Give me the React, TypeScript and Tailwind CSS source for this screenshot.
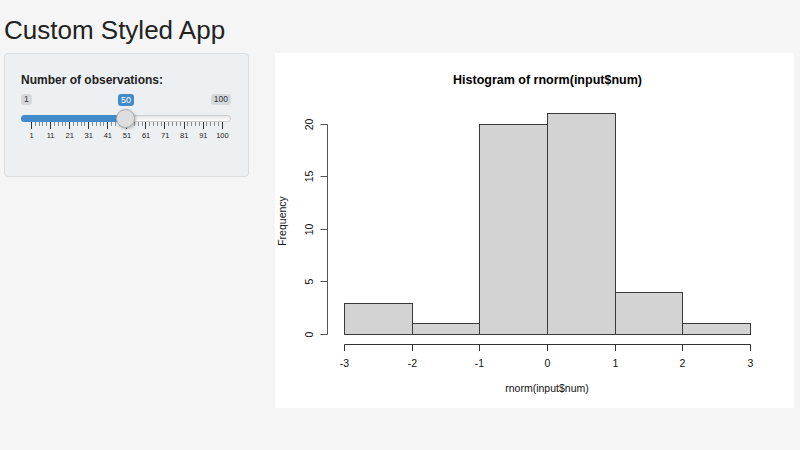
import React from "react";

const FONT = { fontFamily: '"Liberation Sans", Arial, Helvetica, sans-serif' };

const MIN = 1;
const MAX = 100;
const VALUE = 50;

function Slider() {
  const pct = (VALUE - MIN) / (MAX - MIN);
  const x = 10 + pct * 191; // px from the slider's left edge
  const majors = [1, 11, 21, 31, 41, 51, 61, 71, 81, 91, 100];
  const ticks = Array.from({ length: 51 }, (_, i) => i);
  return (
    <div className="mt-[5px] w-[210px] flex flex-col">
      {/* value badges */}
      <div className="relative flex justify-between pt-[2px]">
        <span className="rounded-[3px] bg-[#d6d9db] px-[3px] text-[8.5px] leading-[11px] text-[#333]">1</span>
        <span className="rounded-[3px] bg-[#d6d9db] px-[3px] text-[8.5px] leading-[11px] text-[#333]">100</span>
        <span
          className="absolute top-[2px] -translate-x-1/2 rounded-[3px] bg-[#428bca] px-[3px] text-[9px] leading-[12px] text-white"
          style={{ left: x + 0.5 }}
        >
          {VALUE}
        </span>
      </div>
      {/* track */}
      <div className="relative mt-[10px] h-[7px] rounded-full border border-[#cccccc] bg-gradient-to-b from-[#e6e6e6] to-white">
        <div
          className="absolute -left-px -top-px h-[7px] rounded-l-full bg-[#428bca]"
          style={{ width: x }}
        />
        <div
          className="absolute -top-[7px] h-[19px] w-[19px] rounded-full border border-[#ababab] bg-[#dedede] shadow-[1px_1px_3px_rgba(0,0,0,0.25)]"
          style={{ left: x - 10.5 }}
        />
      </div>
      {/* grid */}
      <div className="ml-[10px] w-[192px] flex justify-between items-start">
        {ticks.map((i) => (
          <div
            key={i}
            className={i % 5 === 0 ? "h-[7px] w-px bg-[#333]" : "h-[4px] w-px bg-[#8a8c8e]"}
          />
        ))}
      </div>
      <div className="ml-[10px] w-[192px] mt-[2px] flex justify-between">
        {majors.map((v) => (
          <div key={v} className="w-px flex justify-center">
            <span className="text-[7.5px] leading-[9px] text-[#222] whitespace-nowrap">{v}</span>
          </div>
        ))}
      </div>
    </div>
  );
}

function Histogram() {
  const xs = [69.5, 137.5, 204.5, 272.5, 340.5, 407.5, 475.5];
  const tops = [250.5, 270.5, 71.5, 60.5, 239.5, 270.5];
  const base = 281.5;
  const yTicks = [
    { v: "0", y: 281.5 },
    { v: "5", y: 228.5 },
    { v: "10", y: 176.5 },
    { v: "15", y: 123.5 },
    { v: "20", y: 71.5 },
  ];
  const xLabels = ["-3", "-2", "-1", "0", "1", "2", "3"];
  return (
    <svg width="519" height="355" viewBox="0 0 519 355" style={FONT}>
      <text x="272.5" y="31" textAnchor="middle" fontSize="12.5" fontWeight="bold" fill="#000">
        Histogram of rnorm(input$num)
      </text>
      {tops.map((t, i) => (
        <rect
          key={i}
          x={xs[i]}
          y={t}
          width={xs[i + 1] - xs[i]}
          height={base - t}
          fill="#d3d3d3"
          stroke="#3a3a3a"
          strokeWidth="1"
        />
      ))}
      <line x1="52.5" y1="71.5" x2="52.5" y2="281.5" stroke="#555" strokeWidth="1" />
      {yTicks.map((t) => (
        <g key={t.v}>
          <line x1="45.5" y1={t.y} x2="52.5" y2={t.y} stroke="#555" strokeWidth="1" />
          <text x="38" y={t.y} textAnchor="middle" fontSize="10.5" fill="#111" transform={`rotate(-90 38 ${t.y})`}>
            {t.v}
          </text>
        </g>
      ))}
      <line x1="69.5" y1="291.5" x2="475.5" y2="291.5" stroke="#333" strokeWidth="1" />
      {xs.map((x, i) => (
        <g key={i}>
          <line x1={x} y1="291.5" x2={x} y2="298" stroke="#333" strokeWidth="1" />
          <text x={x} y="314" textAnchor="middle" fontSize="10.5" fill="#111">
            {xLabels[i]}
          </text>
        </g>
      ))}
      <text x="272" y="338.5" textAnchor="middle" fontSize="10.5" fill="#111">
        rnorm(input$num)
      </text>
      <text x="11" y="168" textAnchor="middle" fontSize="10.5" fill="#111" transform="rotate(-90 11 168)">
        Frequency
      </text>
    </svg>
  );
}

export default function App() {
  return (
    <div className="w-[800px] h-[450px] bg-[#f5f5f5] overflow-hidden flex flex-col px-[4px] pt-[17px]" style={FONT}>
      <h2 className="text-[26px] leading-[26px] font-normal text-[#222]">Custom Styled App</h2>
      <div className="mt-[10px] flex items-start gap-[26px]">
        <div className="w-[245px] h-[124px] rounded-[4px] border border-[#dadee1] bg-[#edf0f2] pt-[19px] px-[16px] flex flex-col">
          <label className="text-[12px] leading-[14px] font-bold text-[#222]">Number of observations:</label>
          <Slider />
        </div>
        <div className="w-[519px] h-[355px] bg-white">
          <Histogram />
        </div>
      </div>
    </div>
  );
}
